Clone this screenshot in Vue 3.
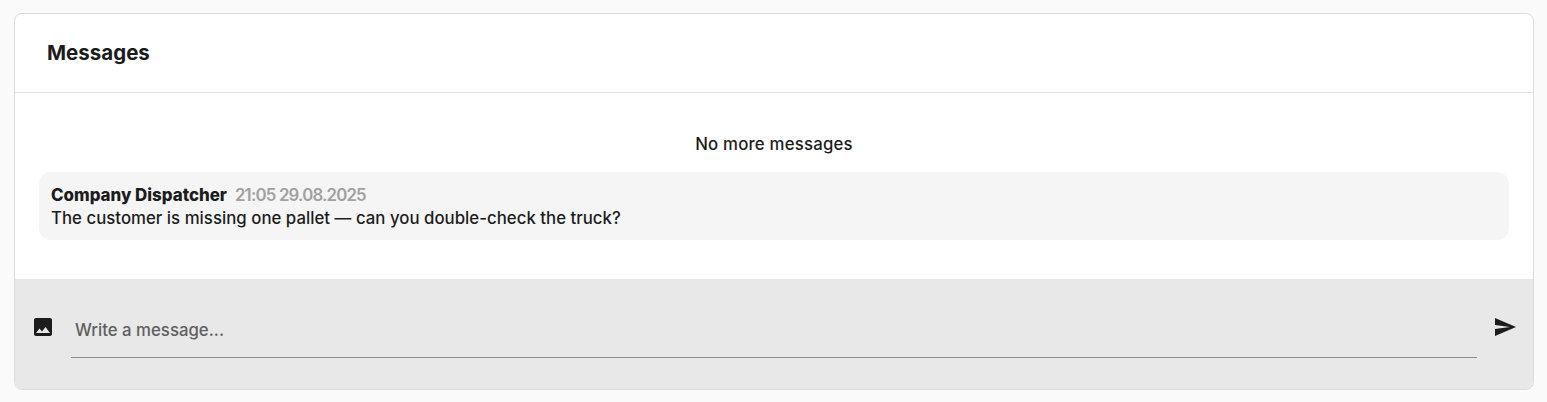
<script setup>
const sender = 'Company Dispatcher'
const time = '21:05 29.08.2025'
const text = 'The customer is missing one pallet — can you double-check the truck?'
</script>

<template>
  <div class="page">
    <section class="card">
      <header class="head"><h2>Messages</h2></header>
      <div class="body">
        <p class="end">No more messages</p>
        <article class="bubble">
          <div class="meta"><strong>{{ sender }}</strong><span>{{ time }}</span></div>
          <div class="text">{{ text }}</div>
        </article>
      </div>
      <footer class="foot">
        <button class="icon" aria-label="Attach image">
          <svg viewBox="0 0 24 24" width="24" height="24"><path d="M21 19V5c0-1.1-.9-2-2-2H5c-1.1 0-2 .9-2 2v14c0 1.1.9 2 2 2h14c1.1 0 2-.9 2-2zM8.5 13.5l2.5 3.01L14.5 12l4.5 6H5l3.5-4.5z"/></svg>
        </button>
        <div class="field"><input placeholder="Write a message..." /></div>
        <button class="icon" aria-label="Send">
          <svg viewBox="0 0 24 24" width="24" height="24"><path d="M2.01 21L23 12 2.01 3 2 10l15 2-15 2z"/></svg>
        </button>
      </footer>
    </section>
  </div>
</template>

<style>
html, body { margin: 0; background: #fafafa; }
</style>

<style scoped>
.page { height: 402px; box-sizing: border-box; padding: 13px 13px 12px 14px; font-family: Inter, "Liberation Sans", sans-serif; color: #1c1c1c; }
.card { height: 100%; box-sizing: border-box; display: flex; flex-direction: column; border: 1px solid #dcdcdc; border-radius: 8px; overflow: hidden; background: #fff; }
.head { height: 79px; flex: none; box-sizing: border-box; display: flex; align-items: center; padding: 1px 0 0 32px; border-bottom: 1px solid #e4e4e4; }
h2 { margin: 0; font-size: 20.5px; font-weight: 700; line-height: 1; }
.body { flex: 1; padding: 39px 24px 0; }
.end { margin: 0 0 16px; height: 24px; line-height: 25px; text-align: center; font-size: 16.8px; font-weight: 500; letter-spacing: .2px; }
.bubble { height: 68px; box-sizing: border-box; padding: 11px 12px 0; background: #f5f5f5; border-radius: 12px; font-size: 16.8px; line-height: 24px; }
.meta { display: flex; gap: 8px; }
.meta strong { font-weight: 800; font-size: 16.9px; }
.meta span { color: #a0a0a0; font-weight: 600; letter-spacing: -.8px; }
.text { font-weight: 500; margin-top: -1px; letter-spacing: .02px; }
.foot { height: 110px; flex: none; display: flex; align-items: flex-start; background: #e8e8e8; padding: 36px 16px 0; box-sizing: border-box; }
.icon { all: unset; flex: none; width: 24px; height: 24px; display: block; }
.icon svg { display: block; fill: #1c1c1c; }
.field { flex: 1; margin: 0 16px; padding-bottom: 12px; border-bottom: 1px solid #8c8c8c; }
input { all: unset; display: block; box-sizing: border-box; width: 100%; height: 30px; padding: 0 4px; font: 500 16.8px Inter, "Liberation Sans", sans-serif; color: #1c1c1c; }
input::placeholder { color: #5f5f5f; opacity: 1; }
</style>
